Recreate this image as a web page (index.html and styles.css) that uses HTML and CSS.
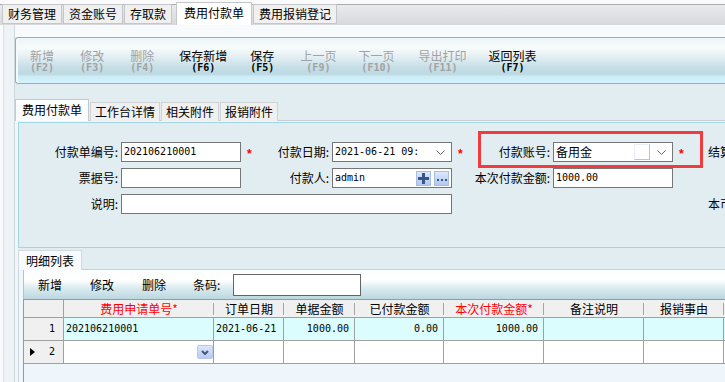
FILE: index.html
```html
<!DOCTYPE html>
<html lang="zh-CN">
<head>
<meta charset="utf-8">
<title>费用付款单</title>
<link rel="stylesheet" href="styles.css">
</head>
<body>
<div class="toptabs">
  <div class="ttab">财务管理</div>
  <div class="ttab">资金账号</div>
  <div class="ttab">存取款</div>
  <div class="ttab active">费用付款单</div>
  <div class="ttab">费用报销登记</div>
</div>
<div class="workspace">
  <div class="gutter"></div>
  <div class="content">
    <div class="tbwrap">
      <div class="toolbar">
        <div class="tb dis"><span class="tl">新增</span><span class="fk">(F2)</span></div>
        <div class="tb dis"><span class="tl">修改</span><span class="fk">(F3)</span></div>
        <div class="tb dis"><span class="tl">删除</span><span class="fk">(F4)</span></div>
        <div class="tb"><span class="tl">保存新增</span><span class="fk">(F6)</span></div>
        <div class="tb"><span class="tl">保存</span><span class="fk">(F5)</span></div>
        <div class="tb dis"><span class="tl">上一页</span><span class="fk">(F9)</span></div>
        <div class="tb dis"><span class="tl">下一页</span><span class="fk">(F10)</span></div>
        <div class="tb dis"><span class="tl">导出打印</span><span class="fk">(F11)</span></div>
        <div class="tb"><span class="tl">返回列表</span><span class="fk">(F7)</span></div>
      </div>
    </div>
    <div class="tabs2">
      <div class="t2 active">费用付款单</div>
      <div class="t2">工作台详情</div>
      <div class="t2">相关附件</div>
      <div class="t2">报销附件</div>
    </div>
    <div class="page">
      <div class="panel">
        <div class="form">
          <label class="lab">付款单编号:</label>
          <div class="inp m">202106210001</div>
          <span class="star">*</span>
          <label class="lab">付款日期:</label>
          <div class="inp combo m"><span class="val">2021-06-21 09:</span><svg class="chev" width="9" height="5" viewBox="0 0 9 5"><polyline points="0.5,0.5 4.5,4.5 8.5,0.5" fill="none" stroke="#6a6a6a" stroke-width="1"/></svg></div>
          <span class="star">*</span>
          <label class="lab">付款账号:</label>
          <div class="inp combo"><span class="val cn">备用金</span><span class="focusbox"></span><svg class="chev" width="9" height="5" viewBox="0 0 9 5"><polyline points="0.5,0.5 4.5,4.5 8.5,0.5" fill="none" stroke="#6a6a6a" stroke-width="1"/></svg></div>
          <span class="star">*</span>
          <label class="lab4">结算方式:</label>

          <label class="lab">票据号:</label>
          <div class="inp"></div>
          <span></span>
          <label class="lab">付款人:</label>
          <div class="inp combo m"><span class="val">admin</span><span class="ib plus"><svg width="11" height="11" viewBox="0 0 11 11"><rect x="0" y="4" width="11" height="3" fill="#3a5684"/><rect x="4" y="0" width="3" height="11" fill="#3a5684"/></svg></span><span class="ib more"><svg width="10" height="3" viewBox="0 0 10 3"><rect x="0" y="0" width="2" height="2" fill="#3a5684"/><rect x="4" y="0" width="2" height="2" fill="#3a5684"/><rect x="8" y="0" width="2" height="2" fill="#3a5684"/></svg></span></div>
          <span></span>
          <label class="lab">本次付款金额:</label>
          <div class="inp m">1000.00</div>
          <span></span>
          <span></span>

          <label class="lab">说明:</label>
          <div class="inp memo"></div>
          <span class="fill4"></span>
          <label class="lab4">本币金额:</label>
        </div>
      </div>
      <div class="detail">
        <div class="dtabs"><div class="dtab">明细列表</div></div>
        <div class="dbody">
          <div class="dtool">
            <span class="db">新增</span>
            <span class="db">修改</span>
            <span class="db">删除</span>
            <span class="db code">条码:</span>
            <span class="codein"></span>
          </div>
          <div class="grid">
            <div class="hc rh"></div>
            <div class="hc red">费用申请单号*</div>
            <div class="hc">订单日期</div>
            <div class="hc">单据金额</div>
            <div class="hc">已付款金额</div>
            <div class="hc red">本次付款金额*</div>
            <div class="hc">备注说明</div>
            <div class="hc">报销事由</div>
            <div class="hc last"></div>

            <div class="rc m">1</div>
            <div class="dc hl m">202106210001</div>
            <div class="dc hl m">2021-06-21</div>
            <div class="dc hl m r">1000.00</div>
            <div class="dc hl m r">0.00</div>
            <div class="dc hl m r">1000.00</div>
            <div class="dc hl"></div>
            <div class="dc hl"></div>
            <div class="dc hl last"></div>

            <div class="rc m cur"><span class="tri"></span><span>2</span></div>
            <div class="dc dd"><span class="ddbtn"><svg width="8" height="5" viewBox="0 0 8 5"><polyline points="1,1 4,4 7,1" fill="none" stroke="#44587c" stroke-width="2"/></svg></span></div>
            <div class="dc"></div>
            <div class="dc"></div>
            <div class="dc"></div>
            <div class="dc"></div>
            <div class="dc"></div>
            <div class="dc"></div>
            <div class="dc last"></div>
          </div>
        </div>
      </div>
    </div>
  </div>
</div>
<div class="redbox"></div>
</body>
</html>
```

FILE: styles.css
```css
* { box-sizing: border-box; }
html, body { margin: 0; height: 100%; overflow: hidden; }
body {
  font-family: "Noto Sans CJK SC", "Noto Sans", sans-serif;
  font-size: 12px;
  color: #000;
  background: #e2edf2;
  line-height: 1;
}
.m { font-family: "DejaVu Sans Mono", "Liberation Mono", monospace; font-size: 10px; }
.cn { font-family: "Noto Sans CJK SC", sans-serif; font-size: 12px; }

/* top tabs */
.toptabs {
  height: 25px;
  display: flex;
  align-items: flex-end;
  padding-left: 2px;
  background: linear-gradient(#fafafa 0 4px, #a8acb0 4px 5px, #e9eaec 5px, #d6d8db 100%);
}
.ttab {
  height: 20px;
  margin-right: 1px;
  margin-bottom: 1px;
  padding: 0 5px;
  border: 1px solid #c4c7ca;
  background: #f0f0f0;
  line-height: 17px;
}
.ttab.active {
  height: 23px;
  margin: 0 1px 0 3px;
  padding: 0 7px;
  background: #fff;
  border-bottom: none;
  line-height: 20px;
}

.workspace { display: flex; height: calc(100% - 25px); }
.gutter {
  width: 15px;
  flex: none;
  background: linear-gradient(to right, #f8fafb 0 3px, #d9dfe2 3px 4px, #edf3f6 4px 14px, #cfd8dc 14px 15px);
}
.content { flex: 1; min-width: 0; display: flex; flex-direction: column; }

/* main toolbar */
.tbwrap { background: #f8fbfd; padding-top: 12px; }
.toolbar {
  height: 47px;
  display: flex;
  align-items: center;
  padding-left: 14px;
  border: 1px solid #a3abb1;
  border-right: none;
  border-radius: 3px 0 0 3px;
  box-shadow: inset 2px 0 0 #f4fafc;
  background: linear-gradient(#edf5f8 0%, #f7fbfc 22%, #e4eff3 42%, #c9e0e8 62%, #bcd9e2 80%, #cdedf7 86%, #d4f2fb 100%);
}
.tb { display: flex; flex-direction: column; align-items: center; }
.tb .tl { line-height: 13px; height: 13px; }
.tb .fk { font-family: "DejaVu Sans Mono", monospace; font-size: 10px; font-weight: bold; line-height: 11px; height: 11px; }
.tb.dis { color: #a2a2a2; }
.tb:nth-child(2) { margin-left: 26px; }
.tb:nth-child(3) { margin-left: 26px; }
.tb:nth-child(4) { margin-left: 25px; }
.tb:nth-child(5) { margin-left: 23px; }
.tb:nth-child(6) { margin-left: 26px; }
.tb:nth-child(7) { margin-left: 22px; }
.tb:nth-child(8) { margin-left: 24px; }
.tb:nth-child(9) { margin-left: 22px; }

/* form tabs */
.tabs2 {
  margin-top: 16px;
  height: 21px;
  display: flex;
  align-items: flex-end;
  border-bottom: 1px solid #c8cdd1;
}
.t2 {
  height: 19px;
  padding: 0 4px;
  margin-left: 1px;
  margin-bottom: -1px;
  border: 1px solid #d0d3d5;
  border-bottom: none;
  background: #f0f0f0;
  line-height: 18px;
}
.t2.active {
  height: 22px;
  margin-left: 0;
  padding: 0 6px;
  background: #fcfdfe;
  border-color: #c3c9cd;
  line-height: 20px;
}

.page {
  flex: 1;
  min-height: 0;
  display: flex;
  flex-direction: column;
  padding: 1px 0 0 3px;
  background: #f0f6f9;
}
.panel {
  height: 126px;
  flex: none;
  border: 1px solid #a2d5e4;
  border-right: none;
  background: #e2edf2;
  padding-top: 19px;
}
.form {
  display: grid;
  grid-template-columns: 102px 120px 21px 70px 120px 20px 81px 120px 35px minmax(0, 1fr);
  grid-auto-rows: 20px;
  row-gap: 6px;
}
.lab { text-align: right; padding-right: 3px; line-height: 20px; white-space: nowrap; }
.lab4 { line-height: 20px; white-space: nowrap; }
.star { color: #f00; padding-left: 6px; padding-top: 5px; line-height: 15px; font-family: "Liberation Sans", sans-serif; font-weight: bold; font-size: 12px; }
.inp {
  background: #fff;
  border: 1px solid #767676;
  line-height: 18px;
  padding-left: 2px;
  white-space: nowrap;
}
.combo { display: flex; align-items: center; }
.combo .val { flex: 1; }
.chev { margin-right: 6px; }
.focusbox {
  width: 16px;
  height: 16px;
  margin-right: 7px;
  border: 1px solid #aac6ee;
  border-left-color: #e6eef9;
  border-top-color: #e6eef9;
}
.ib {
  width: 15px;
  height: 15px;
  display: flex;
  align-items: center;
  justify-content: center;
  border: 1px solid #a7bde6;
  background: linear-gradient(#dde8fb, #b2c8f0);
}
.ib.plus { margin-right: 3px; }
.ib.more { margin-right: 2px; align-items: flex-end; padding-bottom: 3px; }
.memo { grid-column: span 4; }
.fill4 { grid-column: span 4; }

/* detail */
.detail {
  flex: 1;
  min-height: 0;
  display: flex;
  flex-direction: column;
}
.dtabs {
  height: 22px;
  flex: none;
  display: flex;
  align-items: flex-end;
  border-bottom: 1px solid #c8d0d4;
  background: #e2edf2;
}
.dtab {
  height: 20px;
  margin-bottom: -1px;
  padding: 0 7px;
  border: 1px solid #d2dade;
  border-bottom: none;
  background: #f8fbfd;
  line-height: 19px;
}
.dbody {
  flex: 1;
  min-height: 0;
  display: flex;
  flex-direction: column;
  padding-left: 4px;
  border-left: 1px solid #c6d7df;
}
.dtool {
  height: 29px;
  flex: none;
  display: flex;
  align-items: center;
  padding-left: 14px;
  border-left: 1px solid #b4c2c9;
  background: linear-gradient(#fbfdfe 0%, #ffffff 35%, #dbebf0 62%, #bbd7e0 100%);
}
.db { line-height: 14px; }
.db + .db { margin-left: 28px; }
.db.code { width: 30px; margin-left: 27px; }
.codein {
  width: 128px;
  height: 22px;
  margin-left: 10px;
  background: #fff;
  border: 1px solid #646464;
}

.grid {
  flex: 1;
  display: grid;
  grid-template-columns: 40px 150px 70px 71px 89px 100px 100px 80px minmax(0, 1fr);
  grid-template-rows: 18px 23px 23px;
  align-content: start;
  border-top: 1px solid #9a9a9a;
  border-left: 1px solid #9a9a9a;
  background: #eef6fc;
}
.hc {
  border-bottom: 1px solid #a0a0a0;
  background: linear-gradient(#a6a6a6, #a6a6a6) no-repeat right 0 top 3px / 1px 12px, #f0f0f0;
  text-align: center;
  line-height: 17px;
  white-space: nowrap;
}
.hc.rh { background: #f0f0f0; border-right: 1px solid #a0a0a0; }
.hc.last { background: #f0f0f0; }
.hc.red { color: #f00; }
.rc {
  background: #f0f0f0;
  border-right: 1px solid #a0a0a0;
  border-bottom: 1px solid #a0a0a0;
  text-align: right;
  padding-right: 8px;
  line-height: 22px;
}
.rc.cur { display: flex; align-items: center; justify-content: space-between; padding-left: 6px; }
.tri {
  width: 0;
  height: 0;
  border-left: 5px solid #000;
  border-top: 4px solid transparent;
  border-bottom: 4px solid transparent;
}
.dc {
  border-right: 1px solid #a0a0a0;
  border-bottom: 1px solid #a0a0a0;
  background: #fff;
  line-height: 22px;
  padding: 0 2px;
  white-space: nowrap;
}
.dc.hl { background: #dcfdfd; }
.dc.r { text-align: right; padding-right: 5px; }
.dc.last { border-right: none; }
.dc.dd { display: flex; align-items: center; justify-content: flex-end; padding-right: 0; }
.ddbtn {
  width: 16px;
  height: 14px;
  display: flex;
  align-items: center;
  justify-content: center;
  border-radius: 2px;
  background: linear-gradient(#dce6fc, #b9cbf3);
  border: 1px solid #b6c8ee;
}

.redbox {
  position: absolute;
  left: 478px;
  top: 131px;
  width: 225px;
  height: 37px;
  border: 3px solid #f03c3c;
}
```
